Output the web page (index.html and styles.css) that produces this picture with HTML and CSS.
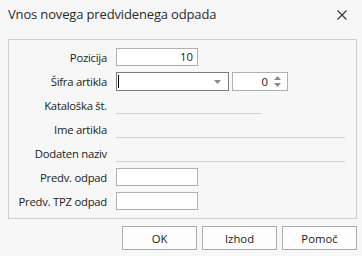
FILE: index.html
```html
<!DOCTYPE html>
<html lang="sl">
<head>
    <meta charset="UTF-8">
    <title>Vnos novega predvidenega odpada</title>
    <link rel="stylesheet" href="styles.css">
</head>
<body>
    <div class="dialog">
        <div class="titlebar">
            <span class="title">Vnos novega predvidenega odpada</span>
            <svg class="close" width="10" height="10" viewBox="0 0 10 10">
                <path d="M0.5 0.5 L9.5 9.5 M9.5 0.5 L0.5 9.5" stroke="#333" stroke-width="1.1" fill="none"/>
            </svg>
        </div>
        <div class="panel">
            <div class="form">
                <label>Pozicija</label>
                <div class="field"><div class="box num">10</div></div>

                <label>Šifra artikla</label>
                <div class="field">
                    <div class="combo">
                        <span class="caret"></span>
                        <svg class="arrow" width="7" height="4" viewBox="0 0 7 4"><path d="M0 0 H7 L3.5 4 Z" fill="#8a8a8a"/></svg>
                    </div>
                    <div class="spin">
                        <span class="val">0</span>
                        <span class="spin-btns">
                            <svg width="7" height="4" viewBox="0 0 7 4"><path d="M0 4 H7 L3.5 0 Z" fill="#8a8a8a"/></svg>
                            <svg width="7" height="4" viewBox="0 0 7 4"><path d="M0 0 H7 L3.5 4 Z" fill="#8a8a8a"/></svg>
                        </span>
                    </div>
                </div>

                <label>Kataloška št.</label>
                <div class="field"><div class="line short"></div></div>

                <label>Ime artikla</label>
                <div class="field"><div class="line"></div></div>

                <label>Dodaten naziv</label>
                <div class="field"><div class="line"></div></div>

                <label>Predv. odpad</label>
                <div class="field"><div class="box"></div></div>

                <label>Predv. TPZ odpad</label>
                <div class="field"><div class="box"></div></div>
            </div>
        </div>
        <div class="buttons">
            <button class="btn">OK</button>
            <button class="btn">Izhod</button>
            <button class="btn">Pomoč</button>
        </div>
    </div>
</body>
</html>
```

FILE: styles.css
```css
body {
    margin: 0;
    background-color: #f7f7f7;
    font-family: "Open Sans", "Noto Sans", sans-serif;
    color: #1b1b1b;
}

.dialog {
    width: 362px;
    height: 256px;
}

.titlebar {
    display: flex;
    align-items: center;
    justify-content: space-between;
    height: 27px;
    padding: 0 15px 0 8px;
    margin-bottom: 12px;
}

.title {
    font-size: 13px;
    color: #2b2b2b;
    letter-spacing: -0.15px;
}

.close {
    display: block;
    margin-top: 2px;
}

/* recuadro con los campos */
.panel {
    margin: 0 5px 0 8px;
    height: 178px;
    border: 1px solid #cdcdcd;
}

.form {
    display: grid;
    grid-template-columns: 98px 1fr;
    grid-auto-rows: 24px;
    column-gap: 9px;
    padding-top: 5px;
    font-size: 11.3px;
}

.form label {
    display: flex;
    align-items: center;
    justify-content: flex-end;
    letter-spacing: -0.25px;
}

.field {
    display: flex;
    align-items: center;
    gap: 3px;
}

.box {
    box-sizing: border-box;
    width: 82px;
    height: 18px;
    background: white;
    border: 1px solid #b0b0b0;
    padding: 0 4px;
    line-height: 16px;
}

.num {
    text-align: right;
}

.combo {
    position: relative;
    box-sizing: border-box;
    width: 113px;
    height: 19px;
    background: white;
    border: 1px solid #7b7b7b;
}

.caret {
    position: absolute;
    left: 1px;
    top: 2px;
    width: 1px;
    height: 13px;
    background: black;
}

.combo .arrow {
    position: absolute;
    right: 7px;
    top: 7px;
}

.spin {
    display: flex;
    align-items: center;
    justify-content: flex-end;
    box-sizing: border-box;
    width: 56px;
    height: 19px;
    background: white;
    border: 1px solid #b0b0b0;
    padding-right: 6px;
}

.spin .val {
    margin-right: 6px;
}

.spin-btns {
    display: flex;
    flex-direction: column;
    gap: 3px;
}

.spin-btns svg {
    display: block;
}

.line {
    width: 229px;
    height: 17px;
    border-bottom: 1px solid #cfcfcf;
}

.line.short {
    width: 146px;
}

.buttons {
    display: flex;
    justify-content: flex-end;
    gap: 5px;
    padding-right: 5px;
    margin-top: 7px;
}

.btn {
    width: 75px;
    height: 24px;
    background: #fdfdfd;
    border: 1px solid #adadad;
    border-radius: 0;
    font-family: "Open Sans", "Noto Sans", sans-serif;
    font-size: 11.3px;
    color: #1b1b1b;
    padding: 0;
}
```
